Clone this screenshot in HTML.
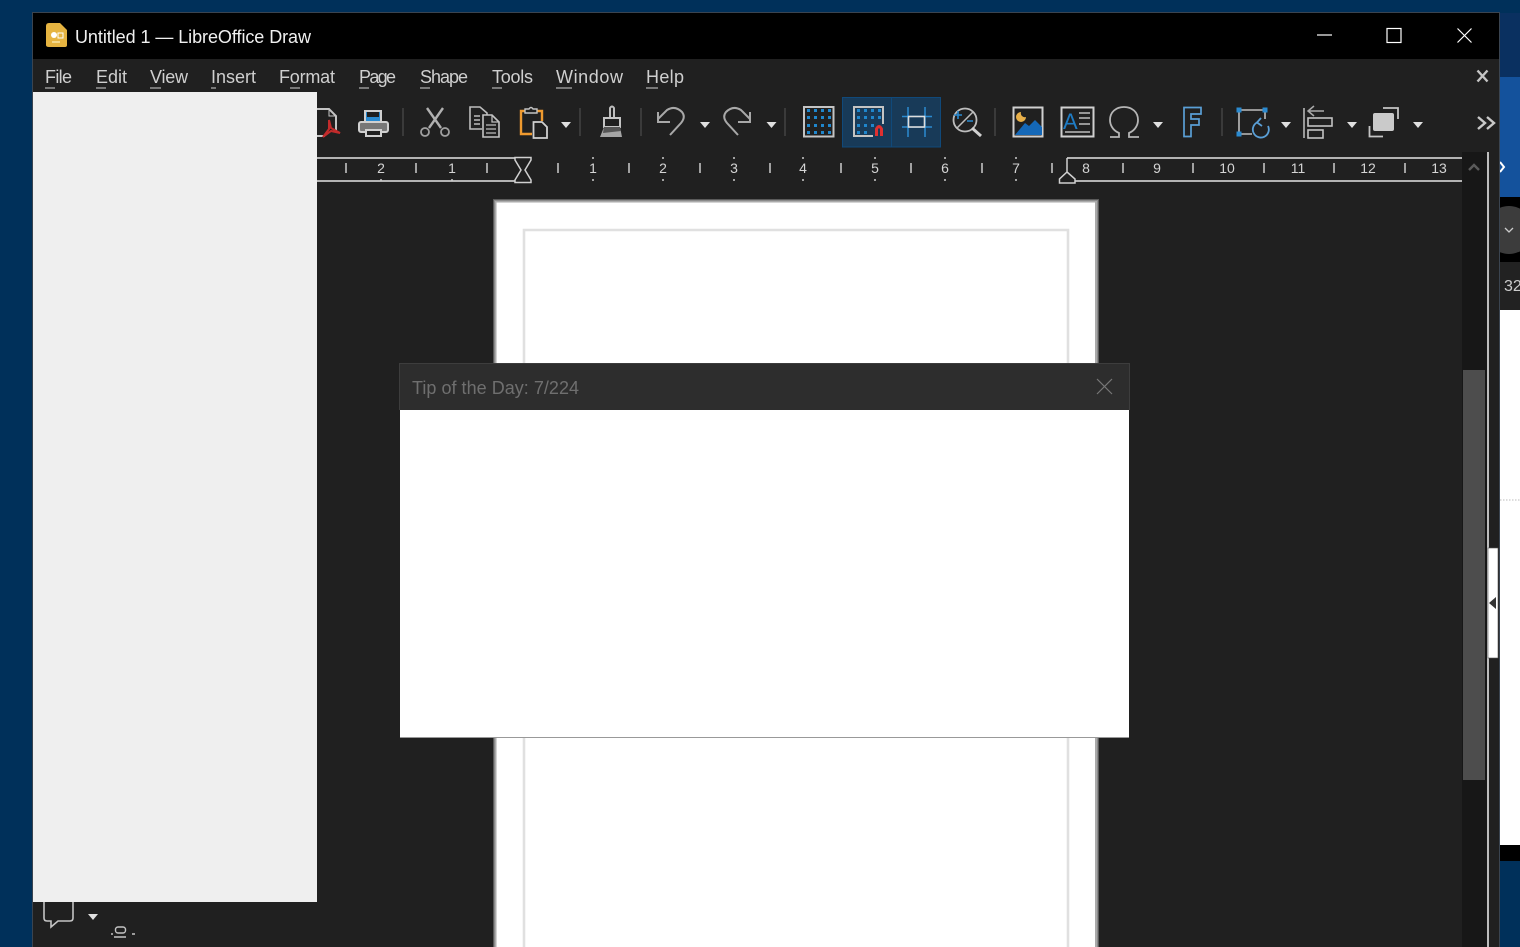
<!DOCTYPE html>
<html lang="en"><head><meta charset="utf-8"><title>Untitled 1 — LibreOffice Draw</title>
<style>
html,body{margin:0;padding:0;width:1520px;height:947px;overflow:hidden;background:#00305a}
svg{display:block;position:absolute;left:0;top:0}
text{font-family:"Liberation Sans",sans-serif}
.m{font-size:18px;fill:#cfcfcf}
.r{font-size:14px;fill:#d4d4d4;text-anchor:middle}
.s{stroke:#c4c4c4;stroke-width:2;fill:none}
.d{fill:#e0e0e0}
.sep{stroke:#3a3a3a;stroke-width:2}
</style></head><body>
<svg width="1520" height="947" viewBox="0 0 1520 947" xmlns="http://www.w3.org/2000/svg">
<!-- background right -->
<rect x="0" y="0" width="1520" height="947" fill="#00305a"/>
<rect x="1499" y="13" width="21" height="64" fill="#0a3060"/>
<rect x="1499" y="77" width="21" height="120" fill="#14529c"/>
<path d="M1500 162l4 5-4 5" stroke="#fff" stroke-width="2" fill="none"/>
<rect x="1499" y="197" width="21" height="65" fill="#000"/>
<circle cx="1509" cy="230" r="24" fill="#3c3c3c"/>
<path d="M1505 228l4 4 4-4" stroke="#ccc" stroke-width="1.3" fill="none"/>
<rect x="1499" y="262" width="21" height="48" fill="#222"/>
<text x="1504" y="291" font-size="16" fill="#ccc">32</text>
<rect x="1499" y="310" width="21" height="535" fill="#fff"/>
<path d="M1500 500H1520" stroke="#bbb" stroke-dasharray="1.5 1.5"/>
<rect x="1499" y="845" width="21" height="16" fill="#000"/>
<!-- window -->
<rect x="32" y="12" width="1468" height="935" fill="#3a4450"/>
<rect x="33" y="13" width="1466" height="934" fill="#202020"/>
<rect x="33" y="13" width="1466" height="46" fill="#000"/>
<!-- title icon -->
<path d="M49 23H60L67 30V45Q67 47 65 47H49Q46 47 46 45V26Q46 23 49 23Z" fill="#e6b441"/>
<circle cx="54" cy="35" r="3" fill="#fff"/><rect x="58" y="33" width="5" height="5" fill="none" stroke="#fff"/>
<path d="M52 42h8" stroke="#f3d98c" stroke-width="2"/>
<text x="75" y="43" font-size="18" fill="#f0f0f0" textLength="236" lengthAdjust="spacing">Untitled 1 — LibreOffice Draw</text>
<path d="M1317 35H1332" stroke="#fff" stroke-width="1.2"/>
<rect x="1387" y="28.5" width="14" height="14" fill="none" stroke="#fff" stroke-width="1.2"/>
<path d="M1457.5 28.5L1471.5 42.5M1471.5 28.5L1457.5 42.5" stroke="#fff" stroke-width="1.2"/>
<!-- menus -->
<text class="m" x="45" y="83" textLength="27">File</text><path d="M45 88h10" stroke="#cfcfcf"/>
<text class="m" x="96" y="83" textLength="31">Edit</text><path d="M96 88h10" stroke="#cfcfcf"/>
<text class="m" x="150" y="83" textLength="38">View</text><path d="M150 88h11" stroke="#cfcfcf"/>
<text class="m" x="211" y="83" textLength="45">Insert</text><path d="M211 88h5" stroke="#cfcfcf"/>
<text class="m" x="279" y="83" textLength="56">Format</text><path d="M290 88h10" stroke="#cfcfcf"/>
<text class="m" x="359" y="83" textLength="37">Page</text><path d="M359 88h10" stroke="#cfcfcf"/>
<text class="m" x="420" y="83" textLength="48">Shape</text><path d="M420 88h10" stroke="#cfcfcf"/>
<text class="m" x="492" y="83" textLength="41">Tools</text><path d="M492 88h10" stroke="#cfcfcf"/>
<text class="m" x="556" y="83" textLength="67">Window</text><path d="M556 88h16" stroke="#cfcfcf"/>
<text class="m" x="646" y="83" textLength="38">Help</text><path d="M646 88h12" stroke="#cfcfcf"/>
<path d="M1477.5 70.5L1487.5 81.5M1487.5 70.5L1477.5 81.5" stroke="#c4c4c4" stroke-width="2.4"/>
<!-- pdf -->
<path class="s" d="M317 109H329L336 116V131M317 136H325"/><path class="s" style="stroke-width:1" d="M329 109V116H336"/>
<path d="M329 120L331 128L340 133L331 131L323 137L329 129Z" fill="none" stroke="#c22b2b" stroke-width="2"/>
<!-- printer -->
<rect x="365" y="111" width="16" height="12" fill="#2a8ad0" stroke="#d0d0d0" stroke-width="2"/>
<rect x="367" y="112" width="12" height="5" fill="#1f1f1f"/>
<rect x="359" y="122" width="29" height="10" rx="2" fill="#777" stroke="#d0d0d0" stroke-width="2"/>
<rect x="366" y="130" width="15" height="6" fill="#202020" stroke="#d0d0d0" stroke-width="2"/>
<path class="sep" d="M403 108V136M580 108V136M641 108V136M785 108V136M995 108V136M1222 108V136"/>
<!-- scissors -->
<path d="M427 108L441 128M443 108L429 128" stroke="#b0b0b0" stroke-width="2.4"/>
<circle cx="425" cy="132" r="4" fill="none" stroke="#a0a0a0" stroke-width="1.8"/><circle cx="445" cy="132" r="4" fill="none" stroke="#a0a0a0" stroke-width="1.8"/>
<!-- copy -->
<path d="M482 129H470V107H480L487 113V115M474 116h6M474 120h6M474 124h6" stroke="#bdbdbd" stroke-width="1.6" fill="none"/>
<path d="M483 115H492L499 122V137H483Z" stroke="#c4c4c4" stroke-width="1.6" fill="#202020"/>
<path d="M486 125h10M486 129h10M486 133h10M492 115v7h7" stroke="#bdbdbd" stroke-width="1.3" fill="none"/>
<!-- paste -->
<path d="M526 111H521V134H532" stroke="#ef9a2f" stroke-width="2.4" fill="none"/>
<path d="M537 111H542V121" stroke="#ef9a2f" stroke-width="2.4" fill="none"/>
<path d="M525 113V109H529Q531 106 533 109H537V113Z" fill="#202020" stroke="#c4c4c4" stroke-width="1.4"/>
<path d="M533.500 122H542L547 127V138H533.500Z" fill="#202020" stroke="#d0d0d0" stroke-width="1.8"/>
<path d="M561 122H571L566 128Z" class="d"/>
<!-- brush -->
<path d="M610 118V108Q612 105 614 108V118" stroke="#bdbdbd" stroke-width="2" fill="none"/>
<rect x="604" y="118" width="16" height="9" fill="#202020" stroke="#c4c4c4" stroke-width="2"/>
<path d="M604 127H620L622 137H600Z" fill="#a5a5a5"/><path d="M604 127H620L621 131L603 133Z" fill="#555"/>
<!-- undo/redo -->
<path d="M670 135L681 123Q686 117 682 112Q675 105 667 110L658 119M658 112V122H670" stroke="#a8a8a8" stroke-width="2" fill="none"/>
<path d="M738 135L727 123Q722 117 726 112Q733 105 741 110L750 119M750 112V122H738" stroke="#a8a8a8" stroke-width="2" fill="none"/>
<path d="M700 122H710L705 128Z" class="d"/><path d="M766.500 122H776.500L771.500 128Z" class="d"/>
<!-- grid -->
<rect x="804" y="107" width="29.500" height="29.500" class="s"/>
<g fill="#1f86cc"><rect x="807" y="109" width="3" height="3"/><rect x="814" y="109" width="3" height="3"/><rect x="821" y="109" width="3" height="3"/><rect x="828" y="109" width="3" height="3"/><rect x="807" y="116" width="3" height="3"/><rect x="814" y="116" width="3" height="3"/><rect x="821" y="116" width="3" height="3"/><rect x="828" y="116" width="3" height="3"/><rect x="807" y="124" width="3" height="3"/><rect x="814" y="124" width="3" height="3"/><rect x="821" y="124" width="3" height="3"/><rect x="828" y="124" width="3" height="3"/><rect x="807" y="131" width="3" height="3"/><rect x="814" y="131" width="3" height="3"/><rect x="821" y="131" width="3" height="3"/><rect x="828" y="131" width="3" height="3"/></g>
<!-- highlighted -->
<rect x="842.500" y="97.500" width="49" height="49.500" fill="#183a58" stroke="#10497a"/>
<rect x="891.500" y="97.500" width="49" height="49.500" fill="#183a58" stroke="#10497a"/>
<path d="M883 124V107H854V136H873" class="s"/>
<g fill="#1f86cc"><rect x="857" y="109" width="3" height="3"/><rect x="864" y="109" width="3" height="3"/><rect x="871" y="109" width="3" height="3"/><rect x="878" y="109" width="3" height="3"/><rect x="857" y="116" width="3" height="3"/><rect x="864" y="116" width="3" height="3"/><rect x="871" y="116" width="3" height="3"/><rect x="878" y="116" width="3" height="3"/><rect x="857" y="124" width="3" height="3"/><rect x="864" y="124" width="3" height="3"/><rect x="871" y="124" width="3" height="3"/><rect x="857" y="131" width="3" height="3"/><rect x="864" y="131" width="3" height="3"/></g>
<path d="M876.500 136V129Q879 124 881.500 129V136" stroke="#e03030" stroke-width="3" fill="none"/>
<path d="M902 116.500H932M902 127H932M908 107V137M925 107V137" stroke="#2a8ad0" stroke-width="1.5"/>
<rect x="908.500" y="116.500" width="16" height="10.500" fill="#183a58" stroke="#ddd" stroke-width="1.6"/>
<!-- zoom -->
<circle cx="965" cy="120" r="11.500" stroke="#bdbdbd" stroke-width="1.8" fill="none"/>
<path d="M972 128L981 136" stroke="#d0d0d0" stroke-width="3"/>
<path d="M957 128L973 112" stroke="#bdbdbd" stroke-width="1.5"/>
<path d="M954 115h8M958 111v8M967 121h6" stroke="#2a8ad0" stroke-width="1.6"/>
<!-- image -->
<rect x="1013.500" y="107.500" width="29" height="29" stroke="#d0d0d0" stroke-width="2" fill="#202020"/>
<path d="M1021 112a5 5 0 1 0 5 5a4 4 0 0 1-5-5Z" fill="#e8b04a"/>
<path d="M1015 135L1025 123L1029 126L1035 120L1042 127V135Z" fill="#1468b8"/>
<!-- text box -->
<rect x="1061.500" y="107.500" width="32" height="29" stroke="#d0d0d0" stroke-width="2" fill="none"/>
<text x="1063" y="129" font-size="22" fill="#1f7cc4">A</text>
<path d="M1079 113h11M1079 118h11M1079 124h11M1065 132h25" stroke="#bdbdbd" stroke-width="1.5"/>
<!-- omega -->
<path d="M1110 137H1119V133C1112 130 1110 124 1110 120C1110 112 1116 107 1124 107C1132 107 1138 112 1138 120C1138 124 1136 130 1129 133V137H1139" stroke="#b5b5b5" stroke-width="1.8" fill="none"/>
<path d="M1153 122H1163L1158 128Z" class="d"/>
<!-- fontwork F -->
<path d="M1184 107.500H1201V114H1191V119H1199V125H1191V136.500H1184Z" stroke="#5a9fd6" stroke-width="1.7" fill="none"/>
<!-- transform -->
<path d="M1239 110H1265V119M1239 110V134H1252" fill="none" stroke="#bdbdbd" stroke-width="1.6"/>
<g fill="#2a8ad0"><rect x="1236.500" y="107.500" width="5" height="5"/><rect x="1262.500" y="107.500" width="5" height="5"/><rect x="1236.500" y="131.500" width="5" height="5"/></g>
<path d="M1257 122.500A8 8 0 1 0 1268 126" stroke="#5a9fd6" stroke-width="1.8" fill="none"/>
<path d="M1261 118L1257 122.500L1262 126" stroke="#5a9fd6" stroke-width="1.8" fill="none"/>
<path d="M1281 122H1291L1286 128Z" class="d"/>
<!-- align -->
<path d="M1304 108V138" stroke="#999" stroke-width="2"/>
<path d="M1324 111H1309M1314 106L1308 111L1314 116" stroke="#aaa" stroke-width="1.5" fill="none"/>
<rect x="1308" y="118" width="24" height="8" fill="none" stroke="#c4c4c4" stroke-width="1.6"/>
<rect x="1308" y="130" width="15" height="8" fill="none" stroke="#c4c4c4" stroke-width="1.6"/>
<path d="M1347 122H1357L1352 128Z" class="d"/>
<!-- arrange -->
<path d="M1383 108H1398V119M1383 136.500H1369.500V126" fill="none" stroke="#c4c4c4" stroke-width="1.8"/>
<rect x="1373" y="113" width="21" height="18" rx="2" fill="#cacaca"/>
<path d="M1413 122H1423L1418 128Z" class="d"/>
<path d="M1478 117L1485 123L1478 129M1487 117L1494 123L1487 129" stroke="#c8c8c8" stroke-width="2.4" fill="none"/>
<!-- ruler -->
<path d="M317 158H515M317 181H515M1067 158H1462M1075 181H1462" stroke="#c8c8c8" stroke-width="1.8"/>
<path d="M515 157.500H531V160L525 170L531 180V182.500H515V180L521 170L515 160Z" fill="#202020" stroke="#d0d0d0" stroke-width="1.5"/>
<path d="M1067 158V172M1067 172L1075 179V183H1059.500V179Z" fill="#202020" stroke="#d0d0d0" stroke-width="1.5"/>
<path d="M346 163v10M416 163v10M487 163v10M558 163v10M629 163v10M700 163v10M770 163v10M841 163v10M911 163v10M982 163v10M1052 163v10M1123 163v10M1193 163v10M1264 163v10M1334 163v10M1405 163v10" stroke="#ccc" stroke-width="1.5"/>
<path d="M381 179v2M452 179v2M593 157v2M593 179v2M663 157v2M663 179v2M734 157v2M734 179v2M803 157v2M803 179v2M875 157v2M875 179v2M945 157v2M945 179v2M1016 157v2M1016 179v2" stroke="#ccc" stroke-width="1.5"/>
<text class="r" x="381" y="173">2</text><text class="r" x="452" y="173">1</text><text class="r" x="593" y="173">1</text><text class="r" x="663" y="173">2</text><text class="r" x="734" y="173">3</text><text class="r" x="803" y="173">4</text><text class="r" x="875" y="173">5</text><text class="r" x="945" y="173">6</text><text class="r" x="1016" y="173">7</text><text class="r" x="1086" y="173">8</text><text class="r" x="1157" y="173">9</text><text class="r" x="1227" y="173">10</text><text class="r" x="1298" y="173">11</text><text class="r" x="1368" y="173">12</text><text class="r" x="1439" y="173">13</text>
<!-- scrollbar -->
<rect x="1462" y="152" width="25" height="795" fill="#171717"/>
<path d="M1469 170L1474 165L1479 170" stroke="#5a5a5a" stroke-width="2.4" fill="none"/>
<rect x="1463" y="370" width="22" height="410" fill="#4d4d4d"/>
<rect x="1487" y="152" width="2" height="795" fill="#bdbdbd"/>
<rect x="1488" y="548" width="10" height="110" fill="#fff" stroke="#555" stroke-width="0.6"/>
<path d="M1489 603L1496 597V609Z" fill="#333"/>
<!-- page -->
<rect x="493" y="199" width="606" height="748" fill="#5a5a5a"/>
<rect x="494" y="200" width="604" height="747" fill="#8a8a8a"/>
<rect x="495" y="201" width="602" height="746" fill="#aaa"/>
<rect x="496.500" y="202.500" width="598.500" height="744.500" fill="#fff"/>
<path d="M524 947V230H1068V947" fill="none" stroke="#e0e0e0" stroke-width="2.6"/>
<!-- dialog -->
<rect x="399" y="363" width="731" height="47" fill="#2d2d2d"/>
<path d="M399.500 410V363.500H1129.500V410" fill="none" stroke="#3d3d3d"/>
<text x="412" y="394" font-size="18" fill="#6f6f6f" textLength="167">Tip of the Day: 7/224</text>
<path d="M1097 379L1112 394M1112 379L1097 394" stroke="#777" stroke-width="1.2"/>
<rect x="400" y="410" width="729" height="327" fill="#fff"/>
<rect x="400" y="737" width="729" height="1" fill="#999"/>
<!-- left overlay -->
<rect x="33" y="92" width="284" height="810" fill="#efefef"/>
<!-- bottom -->
<path d="M44 902V918Q44 921 47 921H51V927L58 921H70Q73 921 73 918V902" stroke="#c4c4c4" stroke-width="1.6" fill="none"/>
<path d="M88 914H98L93 920Z" class="d"/>
<rect x="115.500" y="927" width="10" height="6" rx="2.500" fill="none" stroke="#c4c4c4" stroke-width="1.4"/>
<path d="M114 937h12M111 934h2M132 934h3" stroke="#c4c4c4" stroke-width="1.4"/>
</svg>
</body></html>
